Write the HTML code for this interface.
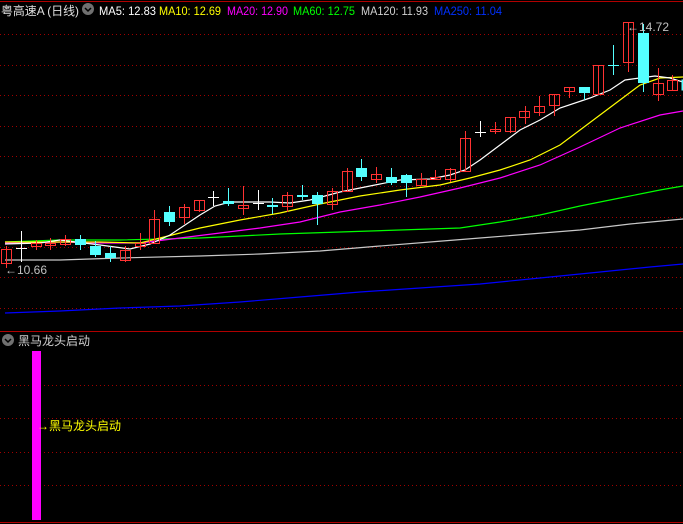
<!DOCTYPE html>
<html><head><meta charset="utf-8"><style>
html,body{margin:0;padding:0;background:#000;width:683px;height:524px;overflow:hidden}
svg{display:block}
text{font-family:"Liberation Sans","Noto Sans CJK SC",sans-serif;font-size:12px}
</style></head><body>
<svg width="683" height="524" viewBox="0 0 683 524" xmlns="http://www.w3.org/2000/svg">
<rect width="683" height="524" fill="#000"/>
<line x1="0" y1="1.5" x2="683" y2="1.5" stroke="#b00000" stroke-width="1"/>
<line x1="0" y1="331.5" x2="683" y2="331.5" stroke="#b00000" stroke-width="1"/>
<line x1="0" y1="522.5" x2="683" y2="522.5" stroke="#b00000" stroke-width="1"/>
<g stroke="#a00000" stroke-width="1" stroke-dasharray="1,3" shape-rendering="crispEdges">
<line x1="0" y1="34.5" x2="683" y2="34.5"/><line x1="0" y1="65.5" x2="683" y2="65.5"/>
<line x1="0" y1="95.5" x2="683" y2="95.5"/><line x1="0" y1="126.5" x2="683" y2="126.5"/>
<line x1="0" y1="156.5" x2="683" y2="156.5"/><line x1="0" y1="186.5" x2="683" y2="186.5"/>
<line x1="0" y1="217.5" x2="683" y2="217.5"/><line x1="0" y1="247.5" x2="683" y2="247.5"/>
<line x1="0" y1="277.5" x2="683" y2="277.5"/><line x1="0" y1="308.5" x2="683" y2="308.5"/>
<line x1="0" y1="385.5" x2="683" y2="385.5"/><line x1="0" y1="418.5" x2="683" y2="418.5"/>
<line x1="0" y1="452.5" x2="683" y2="452.5"/><line x1="0" y1="485.5" x2="683" y2="485.5"/>
</g>
<g fill="none" stroke-width="1.2">
<polyline stroke="#0000ff" points="5,313 60,311 120,308 180,306 240,302 300,297 360,292 420,288 480,284 540,278 600,272 650,267 683,264"/>
<polyline stroke="#c8c8c8" points="5,260 60,260 120,258 200,256 260,254 320,251 380,246 430,242 480,238 530,234 580,230 630,224 683,219"/>
<polyline stroke="#00ff00" points="5,242 60,240 120,240 200,238 280,234 340,232 400,230 460,228 500,222 540,215 580,206 620,198 660,190 683,186"/>
<polyline stroke="#ff00ff" points="5,243 60,242 100,243 140,243 180,238 220,233 260,228 300,222 340,212 380,205 420,197 460,188 500,178 540,165 580,147 620,128 660,115 683,111"/>
<polyline stroke="#ffff00" points="5,242 40,242 100,242 140,243 160,238 200,228 240,220 280,213 320,204 360,196 400,190 440,185 470,178 500,170 530,160 560,145 580,130 600,115 620,100 640,85 660,78 683,77"/>
<polyline stroke="#ffffff" points="5,244 40,243 60,240 100,245 130,249 150,244 170,235 200,215 215,206 230,202 250,202 270,202 290,203 310,200 340,192 370,186 400,180 430,179 450,175 465,170 480,160 500,145 520,130 540,120 560,108 590,98 610,90 625,80 640,78 655,76 670,78 683,82"/>
</g>
<g shape-rendering="crispEdges" stroke-width="1">
<g stroke="#ff3232" fill="none">
<line x1="6.5" y1="246" x2="6.5" y2="268"/><rect x="1.5" y="249.5" width="10" height="14"/>
<line x1="36.5" y1="240" x2="36.5" y2="250"/><rect x="31.5" y="243.5" width="10" height="3"/>
<line x1="50.5" y1="238" x2="50.5" y2="250"/><rect x="45.5" y="243.5" width="10" height="2"/>
<line x1="65.5" y1="235" x2="65.5" y2="246"/><rect x="60.5" y="239.5" width="10" height="5"/>
<line x1="125.5" y1="246" x2="125.5" y2="262"/><rect x="120.5" y="250.5" width="10" height="10"/>
<line x1="140.5" y1="233" x2="140.5" y2="250"/><rect x="135.5" y="243.5" width="10" height="3"/>
<line x1="154.5" y1="210" x2="154.5" y2="243"/><rect x="149.5" y="219.5" width="10" height="24"/>
<line x1="184.5" y1="204" x2="184.5" y2="224"/><rect x="179.5" y="207.5" width="10" height="10"/>
<line x1="199.5" y1="200" x2="199.5" y2="212"/><rect x="194.5" y="200.5" width="10" height="10"/>
<line x1="243.5" y1="186" x2="243.5" y2="215"/><rect x="238.5" y="205.5" width="10" height="3"/>
<line x1="287.5" y1="192" x2="287.5" y2="212"/><rect x="282.5" y="195.5" width="10" height="11"/>
<line x1="332.5" y1="188" x2="332.5" y2="210"/><rect x="327.5" y="191.5" width="10" height="13"/>
<line x1="347.5" y1="168" x2="347.5" y2="191"/><rect x="342.5" y="171.5" width="10" height="20"/>
<line x1="376.5" y1="167" x2="376.5" y2="183"/><rect x="371.5" y="174.5" width="10" height="5"/>
<line x1="421.5" y1="173" x2="421.5" y2="186"/><rect x="416.5" y="179.5" width="10" height="6"/>
<line x1="435.5" y1="170" x2="435.5" y2="179"/><rect x="430.5" y="177.5" width="10" height="2"/>
<line x1="450.5" y1="168" x2="450.5" y2="182"/><rect x="445.5" y="169.5" width="10" height="10"/>
<line x1="465.5" y1="131" x2="465.5" y2="172"/><rect x="460.5" y="138.5" width="10" height="33"/>
<line x1="495.5" y1="122" x2="495.5" y2="134"/><rect x="490.5" y="129.5" width="10" height="2"/>
<line x1="510.5" y1="117" x2="510.5" y2="133"/><rect x="505.5" y="117.5" width="10" height="14"/>
<line x1="525.5" y1="106" x2="525.5" y2="124"/><rect x="519.5" y="111.5" width="10" height="6"/>
<line x1="539.5" y1="96" x2="539.5" y2="116"/><rect x="534.5" y="106.5" width="10" height="6"/>
<line x1="554.5" y1="94" x2="554.5" y2="116"/><rect x="549.5" y="94.5" width="10" height="11"/>
<line x1="569.5" y1="87" x2="569.5" y2="98"/><rect x="564.5" y="87.5" width="10" height="4"/>
<line x1="598.5" y1="65" x2="598.5" y2="95"/><rect x="593.5" y="65.5" width="10" height="29"/>
<line x1="628.5" y1="22" x2="628.5" y2="72"/><rect x="623.5" y="22.5" width="10" height="40"/>
<line x1="658.5" y1="68" x2="658.5" y2="101"/><rect x="653.5" y="83.5" width="10" height="11"/>
<line x1="672.5" y1="75" x2="672.5" y2="90"/><rect x="667.5" y="80.5" width="10" height="10"/>
</g>
<g stroke="#54ffff" fill="#54ffff">
<line x1="80.5" y1="235" x2="80.5" y2="250"/><rect x="75.5" y="239.5" width="10" height="5"/>
<line x1="95.5" y1="241" x2="95.5" y2="257"/><rect x="90.5" y="246.5" width="10" height="8"/>
<line x1="110.5" y1="246" x2="110.5" y2="262"/><rect x="105.5" y="253.5" width="10" height="4"/>
<line x1="169.5" y1="206" x2="169.5" y2="226"/><rect x="164.5" y="212.5" width="10" height="9"/>
<line x1="228.5" y1="188" x2="228.5" y2="206"/><rect x="223.5" y="201.5" width="10" height="2"/>
<line x1="272.5" y1="198" x2="272.5" y2="214"/><rect x="267.5" y="205.5" width="10" height="1"/>
<line x1="302.5" y1="185" x2="302.5" y2="200"/><rect x="297.5" y="195.5" width="10" height="1"/>
<line x1="317.5" y1="192" x2="317.5" y2="225"/><rect x="312.5" y="195.5" width="10" height="8"/>
<line x1="361.5" y1="159" x2="361.5" y2="181"/><rect x="356.5" y="168.5" width="10" height="8"/>
<line x1="391.5" y1="168" x2="391.5" y2="185"/><rect x="386.5" y="177.5" width="10" height="5"/>
<line x1="406.5" y1="174" x2="406.5" y2="197"/><rect x="401.5" y="175.5" width="10" height="7"/>
<line x1="584.5" y1="87" x2="584.5" y2="100"/><rect x="579.5" y="87.5" width="10" height="5"/>
<line x1="613.5" y1="45" x2="613.5" y2="75"/><line x1="608" y1="65.5" x2="619" y2="65.5"/>
<line x1="643.5" y1="24" x2="643.5" y2="92"/><rect x="638.5" y="33.5" width="10" height="49"/>
<rect x="682" y="80" width="2" height="10"/>
</g>
<g stroke="#ffffff">
<line x1="21.5" y1="231" x2="21.5" y2="262"/><line x1="16" y1="248.5" x2="27" y2="248.5"/>
<line x1="213.5" y1="191" x2="213.5" y2="206"/><line x1="208" y1="197.5" x2="219" y2="197.5"/>
<line x1="258.5" y1="190" x2="258.5" y2="210"/><line x1="253" y1="203.5" x2="264" y2="203.5"/>
<line x1="480.5" y1="121" x2="480.5" y2="137"/><line x1="475" y1="132.5" x2="486" y2="132.5"/>
</g>
</g>
<text x="1" y="15" fill="#e0e0e0" font-size="13" textLength="78" lengthAdjust="spacingAndGlyphs">粤高速A (日线)</text>
<circle cx="88" cy="9" r="6" fill="#707070"/>
<polyline points="85,8 88,11 91,8" fill="none" stroke="#000" stroke-width="1.5"/>
<text x="99" y="15" fill="#ffffff" font-size="13" textLength="57" lengthAdjust="spacingAndGlyphs">MA5: 12.83</text>
<text x="159" y="15" fill="#ffff00" font-size="13" textLength="62" lengthAdjust="spacingAndGlyphs">MA10: 12.69</text>
<text x="227" y="15" fill="#ff00ff" font-size="13" textLength="61" lengthAdjust="spacingAndGlyphs">MA20: 12.90</text>
<text x="293" y="15" fill="#00ff00" font-size="13" textLength="62" lengthAdjust="spacingAndGlyphs">MA60: 12.75</text>
<text x="361" y="15" fill="#d0d0d0" font-size="13" textLength="67" lengthAdjust="spacingAndGlyphs">MA120: 11.93</text>
<text x="434" y="15" fill="#0030ff" font-size="13" textLength="68" lengthAdjust="spacingAndGlyphs">MA250: 11.04</text>
<text x="627" y="31" fill="#c0c0c0" font-size="13">←14.72</text>
<text x="5" y="274" fill="#c0c0c0" font-size="13">←10.66</text>
<circle cx="8" cy="340" r="6" fill="#707070"/>
<polyline points="5,339 8,342 11,339" fill="none" stroke="#000" stroke-width="1.5"/>
<text x="18" y="345" fill="#d0d0d0" font-size="13">黑马龙头启动</text>
<rect x="32" y="351" width="9" height="169" fill="#ff00ff"/>
<text x="37" y="430" fill="#ffff00" font-size="13">→黑马龙头启动</text>
</svg>
</body></html>
